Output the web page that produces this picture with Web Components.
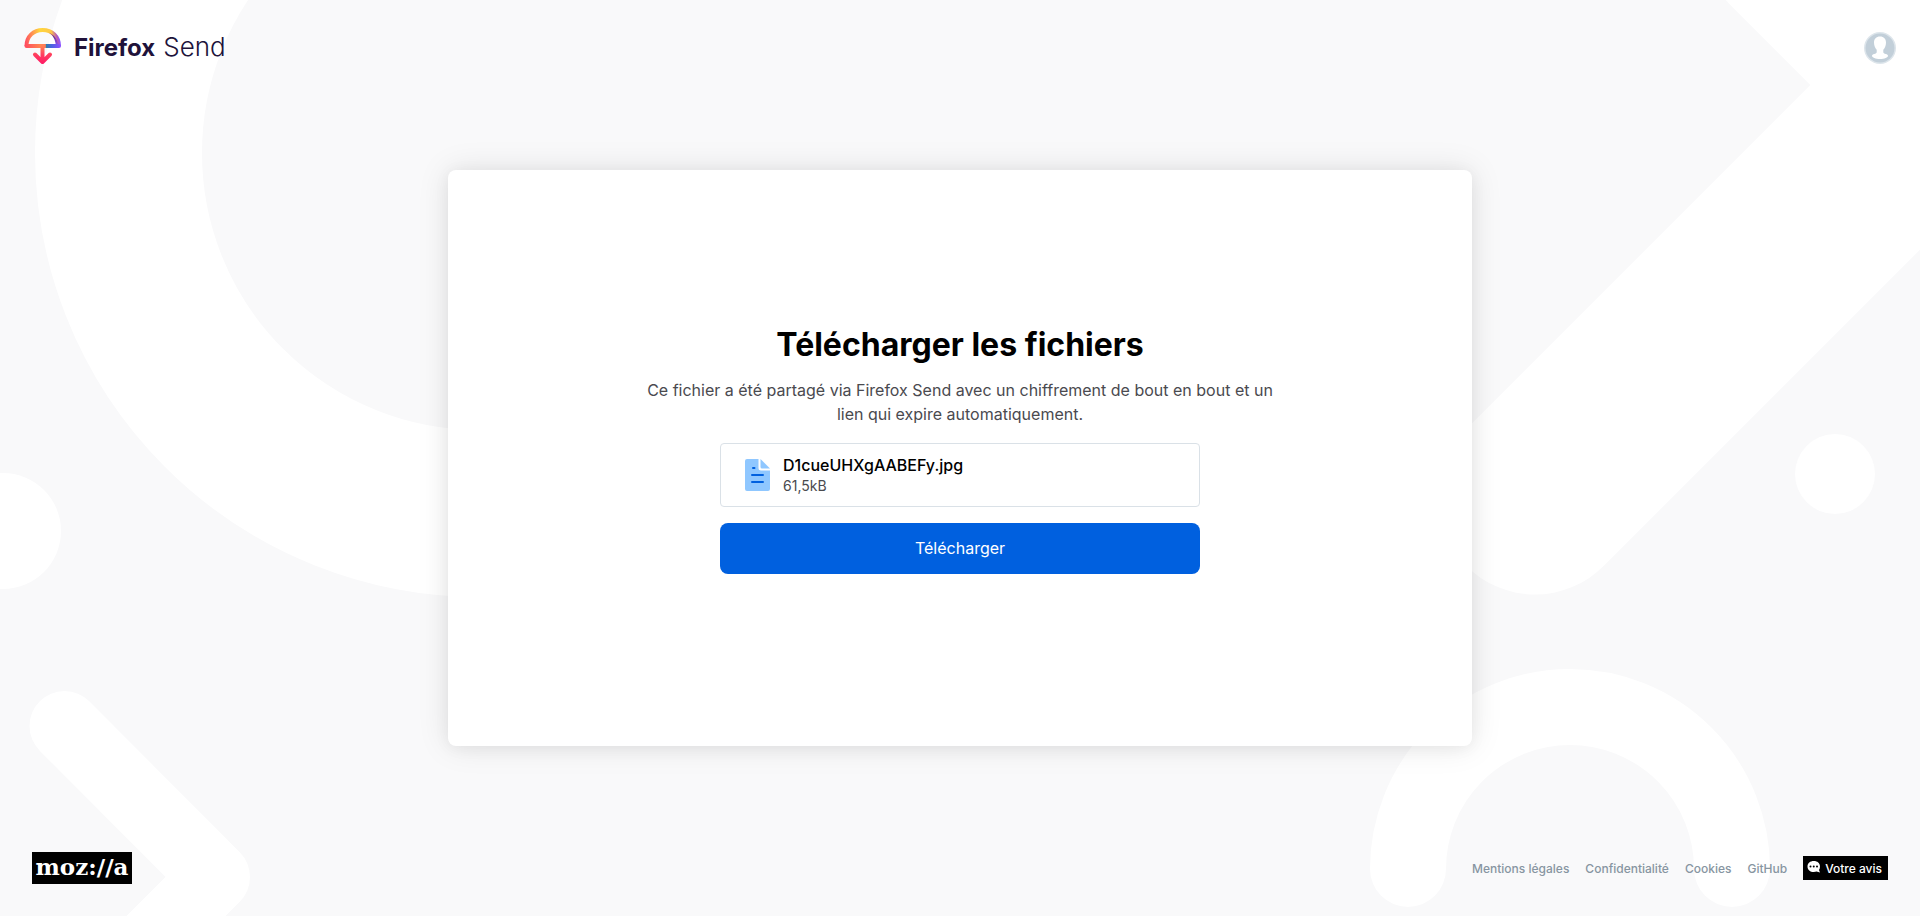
<!DOCTYPE html>
<html lang="fr">
<head>
<meta charset="utf-8">
<meta name="viewport" content="width=device-width, initial-scale=1">
<title>Firefox Send</title>
<style>
	body {
		margin: 0;
		background: #f9f9fa;
		color: #000;
		font-family: Inter, "Liberation Sans", sans-serif;
		font-size: 16px;
		line-height: 24px;
	}
</style>
</head>
<body>
<send-page>
	<send-header slot="header"></send-header>
	<send-card>
		<send-download heading="Télécharger les fichiers" action="Télécharger">
			Ce fichier a été partagé via Firefox Send avec un chiffrement de bout en bout et un lien qui expire automatiquement.
			<send-file slot="file" name="D1cueUHXgAABEFy.jpg" size="61,5kB"></send-file>
		</send-download>
	</send-card>
	<send-footer slot="footer">
		<send-link href="#legal">Mentions légales</send-link>
		<send-link href="#privacy">Confidentialité</send-link>
		<send-link href="#cookies">Cookies</send-link>
		<send-link href="#github">GitHub</send-link>
		<send-feedback>Votre avis</send-feedback>
	</send-footer>
</send-page>

<script>
(function() {
	function define(name, html, setup) {
		let template = document.createElement("template");
		template.innerHTML = html;

		customElements.define(name, class extends HTMLElement {
			constructor() {
				super();
				this._shadowRoot = this.attachShadow({mode: "open"});
				this._shadowRoot.appendChild(template.content.cloneNode(true));
			}

			connectedCallback() {
				if (setup) {
					setup(this, this._shadowRoot);
				}
			}
		});
	}

	define("send-background", `
		<style>
		:host {
			display: block;
			position: absolute;
			inset: 0;
			z-index: -1;
			overflow: hidden;
		}
		svg {
			display: block;
			width: 100%;
			height: 100%;
		}
		</style>
		<svg viewBox="0 0 1920 916" preserveAspectRatio="xMidYMid slice" fill="none" stroke="#fff" stroke-linecap="round" stroke-linejoin="round" aria-hidden="true">
			<path d="M479 -207.500a360.500 360.500 0 0 0 0 721" stroke-width="167"/>
			<circle cx="3" cy="531" r="58" fill="#fff" stroke="none"/>
			<path d="M64.500 726L215 877L115 977" stroke-width="70"/>
			<path d="M1535 497.500L1947.500 85L1800 -62.500" stroke-width="194"/>
			<circle cx="1835" cy="474" r="40" fill="#fff" stroke="none"/>
			<path d="M1408 869a162 162 0 0 1 324 0" stroke-width="76"/>
		</svg>
	`);

	define("send-page", `
		<style>
		:host {
			display: flex;
			flex-direction: column;
			position: relative;
			z-index: 0;
			min-height: 100vh;
		}
		main {
			flex: 1;
			display: flex;
			align-items: center;
			justify-content: center;
		}
		</style>
		<send-background></send-background>
		<slot name="header"></slot>
		<main><slot></slot></main>
		<slot name="footer"></slot>
	`);

	define("send-logo", `
		<style>
		:host {
			display: block;
		}
		a {
			display: flex;
			align-items: center;
			gap: 12px;
			color: #20123a;
			text-decoration: none;
			line-height: 32px;
		}
		.wordmark {
			display: flex;
			align-items: baseline;
			gap: 8px;
			padding-bottom: 2px;
			font-size: 26px;
			font-weight: 300;
		}
		b {
			font-size: 24px;
			font-weight: 700;
		}
		</style>
		<a href="#home">
			<svg width="38" height="40" viewBox="0 0 38 40" fill="none" aria-hidden="true">
				<defs>
					<linearGradient id="dome" x1="2" y1="20" x2="36" y2="14" gradientUnits="userSpaceOnUse">
						<stop offset="0" stop-color="#ff4a62"/>
						<stop offset=".25" stop-color="#ff9150"/>
						<stop offset=".48" stop-color="#ffd53c"/>
						<stop offset=".8" stop-color="#fec846"/>
						<stop offset=".94" stop-color="#b656b8"/>
						<stop offset="1" stop-color="#9059ff"/>
					</linearGradient>
					<linearGradient id="shade" x1="24" y1="4" x2="35" y2="18" gradientUnits="userSpaceOnUse">
						<stop offset="0" stop-color="#d66a6a"/>
						<stop offset=".4" stop-color="#6b2a9c"/>
						<stop offset="1" stop-color="#9059ff"/>
					</linearGradient>
					<linearGradient id="bar" x1="2" y1="0" x2="36" y2="0" gradientUnits="userSpaceOnUse">
						<stop offset="0" stop-color="#ff4f5e"/>
						<stop offset=".45" stop-color="#ff8a50"/>
						<stop offset=".57" stop-color="#ff7a5a"/>
						<stop offset=".59" stop-color="#2b7fa8"/>
						<stop offset=".75" stop-color="#4a63e0"/>
						<stop offset="1" stop-color="#8a50ff"/>
					</linearGradient>
					<linearGradient id="arrow" x1="0" y1="18" x2="0" y2="36" gradientUnits="userSpaceOnUse">
						<stop offset="0" stop-color="#ff8055"/>
						<stop offset=".5" stop-color="#ff3c5f"/>
						<stop offset="1" stop-color="#ff1a66"/>
					</linearGradient>
				</defs>
				<path d="M2.500 18C2.500 8.500 9.500 2 18.700 2S35 8.500 35 18" stroke="url(#dome)" stroke-width="4"/>
				<path d="M24.500 4.500C30 6.500 33.500 11 34.500 18.500H32C31.500 12 29 7 24.500 4.500Z" fill="url(#shade)"/>
				<path d="M2.500 18H35" stroke="url(#bar)" stroke-width="4" stroke-linecap="round"/>
				<path d="M18.500 18V33M11 26.500L18.500 34L26 26.500" stroke="url(#arrow)" stroke-width="4" stroke-linecap="round" stroke-linejoin="round"/>
			</svg>
			<span class="wordmark"><b>Firefox</b> <span>Send</span></span>
		</a>
	`);

	define("send-header", `
		<style>
		:host {
			display: block;
		}
		header {
			display: flex;
			align-items: center;
			justify-content: space-between;
			height: 96px;
			padding: 0 24px;
			box-sizing: border-box;
		}
		button {
			display: block;
			width: 32px;
			height: 32px;
			padding: 0;
			border: 0;
			border-radius: 50%;
			background: none;
			cursor: pointer;
		}
		svg {
			display: block;
		}
		</style>
		<header>
			<send-logo></send-logo>
			<button type="button" aria-label="Compte">
				<svg width="32" height="32" viewBox="0 0 32 32" aria-hidden="true">
					<circle cx="16" cy="16" r="16" fill="#dde5eb"/>
					<circle cx="16" cy="16" r="14.500" fill="#c2cfd9"/>
					<path d="M16 4.500c3.800 0 6 2.400 6 6 0 1.600-.3 3-.8 4.200-.5 1.300-1.200 2.300-1.900 3.100v2.400c0 .8 1 1.300 2.500 1.700 1.300.4 2.200.9 2.200 1.800 0 1.800-3.500 3.200-8 3.200s-8-1.400-8-3.200c0-.9.900-1.400 2.200-1.800 1.500-.4 2.500-.9 2.500-1.700v-2.400c-.7-.8-1.400-1.800-1.900-3.100-.5-1.200-.8-2.600-.8-4.200 0-3.600 2.200-6 6-6z" fill="#fff"/>
				</svg>
			</button>
		</header>
	`);

	define("send-card", `
		<style>
		:host {
			display: flex;
			flex-direction: column;
			align-items: center;
			justify-content: center;
			width: 100%;
			max-width: 1024px;
			min-height: 576px;
			padding: 0 16px 17px;
			box-sizing: border-box;
			border-radius: 8px;
			background: #fff;
			box-shadow: 0 0 32px rgba(12, 12, 13, .1), 0 2px 16px rgba(12, 12, 13, .05);
		}
		</style>
		<slot></slot>
	`);

	define("send-download", `
		<style>
		:host {
			display: flex;
			flex-direction: column;
			align-items: center;
			max-width: 640px;
		}
		h1 {
			margin: 0 0 13px;
			font-size: 32px;
			line-height: 40px;
			font-weight: 700;
			text-align: center;
		}
		p {
			margin: 0 0 17px;
			color: #4a4a4f;
			text-align: center;
		}
		.box {
			display: flex;
			flex-direction: column;
			gap: 16px;
			width: 100%;
			max-width: 480px;
		}
		button {
			padding: 13px 16px 14px;
			border: 0;
			border-radius: 8px;
			background: #0060df;
			color: #fff;
			font: inherit;
			cursor: pointer;
		}
		</style>
		<h1></h1>
		<p><slot></slot></p>
		<div class="box">
			<slot name="file"></slot>
			<button type="button"></button>
		</div>
	`, function(host, root) {
		root.querySelector("h1").textContent = host.getAttribute("heading");
		root.querySelector("button").textContent = host.getAttribute("action");
	});

	define("send-file", `
		<style>
		:host {
			display: flex;
			align-items: center;
			gap: 12px;
			height: 64px;
			padding: 0 24px;
			box-sizing: border-box;
			border: 1px solid #dae1e7;
			border-radius: 4px;
		}
		svg {
			flex: none;
		}
		.name {
			font-weight: 500;
			line-height: 20px;
		}
		.size {
			color: #4a4a4f;
			font-size: 14px;
			line-height: 21px;
		}
		</style>
		<svg width="26" height="32" viewBox="0 0 26 32" aria-hidden="true">
			<path d="M2 0h11.500v9a2.500 2.500 0 0 0 2.500 2.500h9V30a2 2 0 0 1-2 2H2a2 2 0 0 1-2-2V2a2 2 0 0 1 2-2z" fill="#8fc7ff"/>
			<path d="M15.500 0L25 9.500H17A1.500 1.500 0 0 1 15.500 8z" fill="#8fc7ff"/>
			<path d="M8 9h1.500M7 16h11M7 23h11" stroke="#0060df" stroke-width="2" stroke-linecap="round"/>
		</svg>
		<div>
			<div class="name"></div>
			<div class="size"></div>
		</div>
	`, function(host, root) {
		root.querySelector(".name").textContent = host.getAttribute("name");
		root.querySelector(".size").textContent = host.getAttribute("size");
	});

	define("send-footer", `
		<style>
		:host {
			display: block;
		}
		footer {
			display: flex;
			flex-wrap: wrap;
			align-items: center;
			justify-content: space-between;
			padding: 32px;
			font-size: 12px;
			line-height: 22px;
			font-weight: 500;
		}
		nav {
			display: flex;
			flex-wrap: wrap;
			align-items: center;
			gap: 16px;
		}
		.mozilla {
			width: 100px;
			background: #000;
			color: #fff;
			font: bold 23px/30px "DejaVu Serif", serif;
			padding-bottom: 2px;
			text-align: center;
			text-decoration: none;
		}
		</style>
		<footer>
			<a class="mozilla" href="#mozilla">moz://a</a>
			<nav><slot></slot></nav>
		</footer>
	`);

	define("send-link", `
		<style>
		:host {
			display: block;
		}
		a {
			display: block;
			padding-top: 2px;
			color: #8795a1;
			text-decoration: none;
		}
		</style>
		<a><slot></slot></a>
	`, function(host, root) {
		root.querySelector("a").href = host.getAttribute("href");
	});

	define("send-feedback", `
		<style>
		:host {
			display: block;
		}
		a {
			display: flex;
			gap: 4px;
			padding: 2px 6px 0 4px;
			background: #000;
			color: #fff;
			text-decoration: none;
		}
		svg {
			margin-top: 2px;
		}
		</style>
		<a href="#feedback">
			<svg width="14" height="14" viewBox="0 0 14 14" aria-hidden="true">
				<path d="M6.800 1C10.300 1 13 3.200 13 6.400c0 1.500-.4 2.700-1 3.600l1 2.400-3.400-.9c-.9.300-1.800.5-2.800.5C3.200 12 .5 9.700.5 6.400S3.200 1 6.800 1z" fill="#fff"/>
				<circle cx="3.500" cy="6.500" r="1"/>
				<circle cx="6.750" cy="6.500" r="1"/>
				<circle cx="10" cy="6.500" r="1"/>
			</svg>
			<slot></slot>
		</a>
	`);
})();
</script>
</body>
</html>
